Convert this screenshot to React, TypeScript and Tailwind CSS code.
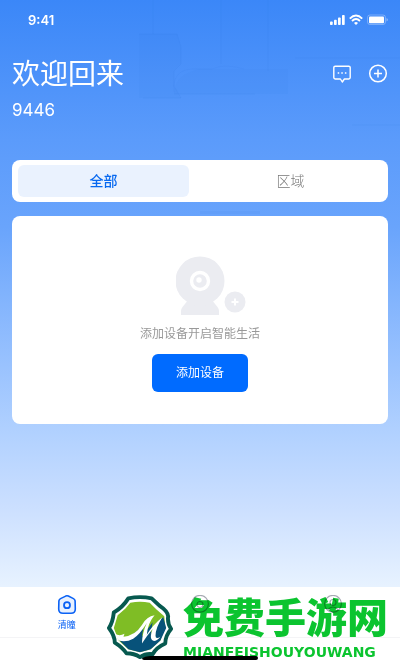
import { useState } from 'react';

const cameraBody = '#ebecf1';

const StatusBar = () => (
    <div className="flex h-10 items-center justify-between pl-7 pr-3 text-white">
        <span className="font-['Inter','Liberation_Sans',sans-serif] text-[13px] font-semibold leading-4">9:41</span>
        <svg className="h-3 w-[59px]" viewBox="0 0 59 12" fill="white" aria-hidden="true">
            <rect x="1" y="7.5" width="2.7" height="3.5" rx="0.8" />
            <rect x="5" y="5.8" width="2.7" height="5.2" rx="0.8" />
            <rect x="9" y="3.4" width="2.7" height="7.6" rx="0.8" />
            <rect x="13" y="1" width="2.7" height="10" rx="0.8" />
            <path d="M20.8 4.6Q27 -1.5 33.2 4.6M23 7Q27 3.2 31 7" fill="none" stroke="white" strokeWidth="1.9" />
            <path d="M25 8.9Q27 7.3 29 8.9L27 11Z" />
            <rect x="38.5" y="1" width="18" height="9.5" rx="2.5" fill="none" stroke="white" strokeOpacity="0.3" />
            <rect x="40" y="2.4" width="15" height="6.8" rx="1" />
            <path d="M57.5 4v3.5q1.4-.5 1.4-1.75t-1.4-1.75" fillOpacity="0.4" />
        </svg>
    </div>
);

// Very faint kitchen lamps and shelf behind the header
const RoomBackdrop = () => (
    <svg className="absolute inset-x-0 top-0 w-full" viewBox="0 0 400 240" fill="none" aria-hidden="true">
        <g stroke="#2f74dd" strokeOpacity="0.1">
            <path d="M153 0v34M221 0v64M268 0v71" />
            <path d="M139 34h38l4 13v17l-7 7v15l7 12h-38" />
            <path d="M174 92q-2-22 18-23h20q12-6 32 0M174 94h81M295 58h105M352 125h48" />
        </g>
        <path d="M139 34h38l4 13v17l-7 7v15l7 12h-42z" fill="#2f74dd" fillOpacity="0.05" />
        <path d="M200 69h88v25H174q0-20 26-25z" fill="#2f74dd" fillOpacity="0.05" />
        <path d="M200 211h60v3h-60z" fill="#2f74dd" fillOpacity="0.08" />
    </svg>
);

const MessageIcon = () => (
    <svg className="h-5 w-5" viewBox="0 0 20 20" fill="none" stroke="white" strokeWidth="1.4" aria-hidden="true">
        <path d="M3.2 2.2h13.6q1.4 0 1.4 1.4v10q0 1.4-1.4 1.4h-4.4L10.3 18l-1.9-3H3.2q-1.4 0-1.4-1.4v-10q0-1.4 1.4-1.4z" strokeLinejoin="round" />
        <path d="M5.7 9h1.5M9.3 9h1.5M12.9 9h1.5" />
    </svg>
);

const PlusCircleIcon = () => (
    <svg className="h-5 w-5" viewBox="0 0 20 20" fill="none" stroke="white" strokeWidth="1.5" aria-hidden="true">
        <circle cx="10" cy="9.5" r="8.3" />
        <path d="M10 5.5v8M6 9.5h8" />
    </svg>
);

const CameraIllustration = () => (
    <svg className="h-[60px] w-[72px]" viewBox="0 0 72 60" aria-hidden="true">
        <path d="M11 42v3.5L6.5 51Q5 53 5 55v4h38v-4q0-2-1.5-4L37 45.5V42z" fill={cameraBody} />
        <circle cx="24" cy="25" r="24.5" fill={cameraBody} />
        <circle cx="24" cy="25" r="8.5" fill={cameraBody} stroke="white" strokeWidth="3.4" />
        <circle cx="23" cy="24" r="2.7" fill="white" />
        <circle cx="59" cy="46" r="10.5" fill={cameraBody} />
        <path d="M59 42.5v7M55.5 46h7" stroke="white" strokeWidth="2" />
    </svg>
);

const HomeIcon = () => (
    <svg className="h-5 w-5" viewBox="0 0 20 20" fill="none" stroke="#0b62f5" aria-hidden="true">
        <path d="M8.7 1.1q1.3-.6 2.6 0l5.2 2.5q1.4.7 1.6 2.2l.2 8.1q0 4.3-4.3 4.3H6q-4.3 0-4.3-4.3l.2-8.1q.2-1.5 1.6-2.2z" fill="#e8f1ff" strokeWidth="1.6" />
        <circle cx="10" cy="10.2" r="3" strokeWidth="1.8" />
    </svg>
);

const DiscoverIcon = () => (
    <svg className="h-5 w-5" viewBox="0 0 20 20" fill="none" stroke="#a6a9b2" strokeWidth="1.2" aria-hidden="true">
        <circle cx="10" cy="8.8" r="8.4" />
        <circle cx="10" cy="9.5" r="3" />
    </svg>
);

const ProfileIcon = () => (
    <svg className="h-5 w-5" viewBox="0 0 20 20" fill="none" stroke="#a6a9b2" strokeWidth="1.2" aria-hidden="true">
        <circle cx="10" cy="8.8" r="8.4" />
        <circle cx="10" cy="7.5" r="3" />
        <path d="M4.5 15q5.5-6 11 0" />
    </svg>
);

const SiteBadge = () => (
    <svg className="h-[66px] w-[66px] shrink-0" viewBox="0 0 68 66" aria-hidden="true">
        <path
            d="M22 3.5Q34 1 46 3.5L54 11Q63 17 63 22Q62 29 66 35Q60 42 60 50Q51 54 47 61Q40 60 34 64Q28 60 20 60Q16 54 8 49Q8 42 2 34Q6 28 7 18Q16 13 22 3.5Z"
            fill="white"
            stroke="#07594f"
            strokeWidth="4"
            strokeLinejoin="round"
        />
        <path d="M24 8Q34 6 44 8L51 15L59 22L60 33L55 47L45 56L34 59L22 56L12 47L7 34L11 21L19 14Z" fill="#7fbd25" />
        <path d="M12 46Q27 44 38 30L36 43L47 28L45 41Q50 27 58 23L61 34L55 47L45 56L34 59L22 56Z" fill="#07527a" />
        <path
            d="M8 40Q13 43 18 40L17 43Q29 42 36 31Q41 22 49 21Q42 29 41 41Q47 31 57 23Q50 34 50 42Q50 46 55 43Q49 50 46 46Q44 43 47 35Q41 42 36 50Q36 40 41 29Q33 42 27 45Q20 49 12 47Z"
            fill="white"
        />
    </svg>
);

const App = () => {
    const [tab, setTab] = useState('全部');

    return (
        <div className="relative flex min-h-screen flex-col overflow-hidden bg-[linear-gradient(to_bottom,#3b87f8_0%,#5b9bfb_21%,#69a4fc_34%,#b1d1ff_65%,#cbdfff_76%,#e7f2ff_88%)] font-['Inter','Noto_Sans_CJK_SC',sans-serif]">
            <RoomBackdrop />
            <div className="relative flex grow flex-col">
                <StatusBar />

                <header className="flex items-start justify-between px-3 pt-3">
                    <div className="text-white">
                        <h1 className="text-[28px] leading-11">欢迎回来</h1>
                        <p className="text-[17px] leading-7">9446</p>
                    </div>
                    <div className="flex gap-4 pt-3">
                        <button type="button" aria-label="消息">
                            <MessageIcon />
                        </button>
                        <button type="button" aria-label="添加">
                            <PlusCircleIcon />
                        </button>
                    </div>
                </header>

                <main className="flex flex-col gap-3.5 px-3 pt-9">
                    <div className="flex gap-4 rounded-lg bg-white py-[5px] pl-1.5 pr-3">
                        {['全部', '区域'].map((name) => (
                            <button
                                key={name}
                                type="button"
                                onClick={() => setTab(name)}
                                className={
                                    tab === name
                                        ? 'h-8 flex-1 rounded-md bg-[#eaf2fe] text-sm font-medium text-[#0869f0]'
                                        : 'h-8 flex-1 rounded-md text-sm font-light text-[#777777]'
                                }
                            >
                                {name}
                            </button>
                        ))}
                    </div>

                    <section className="flex flex-col items-center rounded-lg bg-white pb-8 pt-10">
                        <div className="pl-6">
                            <CameraIllustration />
                        </div>
                        <p className="pt-2 text-xs leading-5 text-[#999999]">添加设备开启智能生活</p>
                        <button
                            type="button"
                            className="mt-2.5 h-[38px] rounded-md bg-[#006bff] px-6 text-xs text-white"
                        >
                            添加设备
                        </button>
                    </section>
                </main>
            </div>

            <footer className="relative bg-white">
                <nav className="grid grid-cols-3 border-b border-[#f4f4f6] pb-1 pt-2">
                    <a href="#" className="flex flex-col items-center gap-0.5 text-[9px] leading-4 text-[#0b62f5]">
                        <HomeIcon />
                        清瞳
                    </a>
                    <a href="#" className="flex flex-col items-center" aria-label="发现">
                        <DiscoverIcon />
                    </a>
                    <a href="#" className="flex flex-col items-center" aria-label="我的">
                        <ProfileIcon />
                    </a>
                </nav>
                <div className="flex h-7 items-end justify-center pb-1.5">
                    <div className="h-1 w-[116px] rounded-full bg-black" />
                </div>

                <div className="pointer-events-none absolute bottom-1 right-3 flex items-start gap-2.5">
                    <SiteBadge />
                    <div className="flex flex-col text-[#0bc42f] mix-blend-multiply">
                        <span className="text-[41px] font-black leading-12">免费手游网</span>
                        <span className="font-['DejaVu_Sans',sans-serif] text-[14px] font-bold leading-5">
                            MIANFEISHOUYOUWANG
                        </span>
                    </div>
                </div>
            </footer>
        </div>
    );
};

export default App;
